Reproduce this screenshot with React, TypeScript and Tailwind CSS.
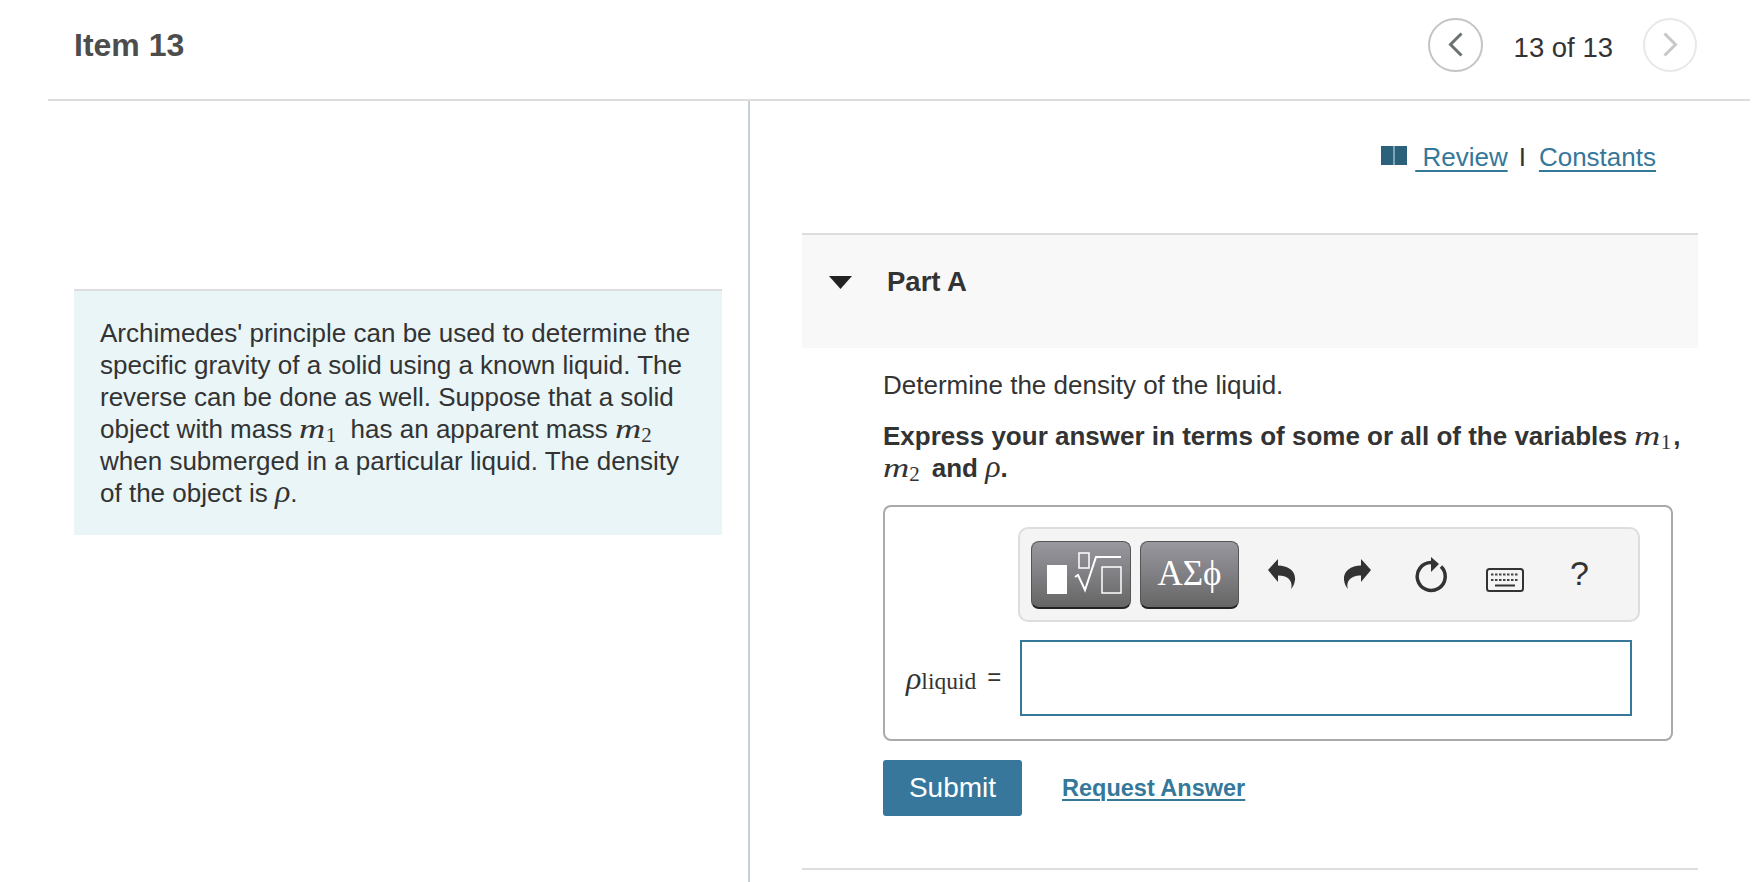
const M = ({ children }: { children: React.ReactNode }) => (
  <span className="inline-block origin-left scale-x-[1.3] mr-[6px] font-['Liberation_Serif',serif] italic text-[28px] leading-none font-normal">{children}</span>
)

const Rho = () => (
  <span className="font-['Liberation_Serif',serif] italic text-[32px] leading-[0] font-normal">ρ</span>
)

const Sub = ({ children }: { children: React.ReactNode }) => (
  <span className="font-['Liberation_Serif',serif] text-[21px] leading-none font-normal relative top-[4px]">{children}</span>
)

const App = () => {
  return (
    <div className="w-[1764px] h-[882px] overflow-hidden bg-white text-[26px] leading-[32px] text-[#333] font-['Liberation_Sans',Arial,sans-serif]">
      <header className="ml-[48px] mr-[14px] h-[101px] pl-[26px] pr-[53px] flex items-center justify-between border-b-2 border-[#ddd]">
        <h1 className="text-[32px] font-bold text-[#4d4d4d] -mt-[10px]">Item 13</h1>
        <div className="flex items-center -mt-[10px]">
          <button className="w-[55px] h-[54px] rounded-full border-2 border-[#c4c4c4] flex items-center justify-center">
            <svg width="15" height="25" viewBox="0 0 15 25" fill="none" stroke="#6a7272" strokeWidth="3"><path d="M13.500 1.500 2.500 12.500l11 11" /></svg>
          </button>
          <span className="ml-[31px] mr-[30px] mt-[6px] text-[27.500px] text-[#333]">13 of 13</span>
          <button className="w-[54px] h-[54px] rounded-full border-2 border-[#e8e8e8] flex items-center justify-center">
            <svg width="15" height="25" viewBox="0 0 15 25" fill="none" stroke="#c8c8c8" strokeWidth="3"><path d="m1.500 1.500 11 11-11 11" /></svg>
          </button>
        </div>
      </header>

      <div className="flex h-[781px]">
        <div className="w-[748px] shrink-0 pl-[74px] pr-[26px] pt-[188px]">
          <div className="border-t-2 border-[#ddd] bg-[#e9f5f7] pl-[26px] pr-[24px] pt-[26px] pb-[26px]">
            <p>
              Archimedes' principle can be used to determine the specific gravity of a solid using a known liquid. The reverse can be done as well. Suppose that a solid object with mass <M>m</M><Sub>1</Sub>&nbsp; has an apparent mass <M>m</M><Sub>2</Sub> when submerged in a particular liquid. The density of the object is <Rho />.
            </p>
          </div>
        </div>

        <div className="flex-1 border-l-2 border-[#c3d2dc] pl-[52px] pr-[66px]">
          <div className="flex justify-end items-center pt-[40px] pr-[42px] text-[#35789a]">
            <a href="#" className="flex items-center underline underline-offset-[4px]">
              <svg width="26" height="19" viewBox="0 0 26 19" className="mr-[8px] -mt-[3px]">
                <rect x="12" y="0" width="2" height="19" fill="#7fa3b5" />
                <rect x="0" y="0" width="12" height="19" fill="#2c617c" />
                <rect x="14" y="0" width="12" height="19" fill="#2c617c" />
              </svg>
              <span className="whitespace-pre"> Review</span>
            </a>
            <span className="ml-[11px] mr-[13px] text-[#333]">I</span>
            <a href="#" className="underline underline-offset-[4px]">Constants</a>
          </div>

          <div className="mt-[60px] h-[115px] border-t-2 border-[#ddd] bg-[#f8f8f8] pt-[31px] pl-[27px] flex">
            <svg width="23" height="13" viewBox="0 0 23 13" fill="#222" className="mt-[10px]"><path d="M0 0h23L11.500 13z" /></svg>
            <h2 className="ml-[35px] text-[27.500px] font-bold">Part A</h2>
          </div>

          <div className="pl-[81px]">
            <p className="mt-[21px]">Determine the density of the liquid.</p>
            <p className="mt-[19px] font-bold">
              Express your answer in terms of some or all of the variables <M>m</M><Sub>1</Sub><span className="ml-[2px]">,</span> <M>m</M><Sub>2</Sub><span className="ml-[12px]">and</span> <Rho />.
            </p>

            <div className="mt-[21px] mr-[25px] border-2 border-[#aaa] rounded-[8px] pt-[20px] pb-[23px] pl-[21px] pr-[39px]">
              <div className="flex justify-end -mr-[8px]">
                <div className="w-[622px] h-[95px] flex items-center border-2 border-[#ddd] rounded-[10px] bg-[#f4f4f4] pl-[11px]">
                  <button className="w-[100px] h-[68px] rounded-[8px] border border-[#555] border-b-2 border-b-[#222] bg-gradient-to-b from-[#9a98a0] to-[#666] flex items-center justify-center">
                    <svg width="86" height="50" viewBox="0 0 86 50" fill="none" stroke="#fff" strokeWidth="1.500">
                      <rect x="9" y="16" width="20" height="29" fill="#fff" stroke="none" />
                      <rect x="41" y="4" width="10" height="15" />
                      <path d="M37 28l3-2 7 15 11-33h25" strokeWidth="2" />
                      <rect x="64" y="18" width="19" height="26" />
                    </svg>
                  </button>
                  <button className="ml-[9px] w-[99px] h-[68px] rounded-[8px] border border-[#555] border-b-2 border-b-[#222] bg-gradient-to-b from-[#9a98a0] to-[#666] text-white font-['Liberation_Serif',serif] text-[35px]">
                    ΑΣϕ
                  </button>
                  <svg width="30" height="32" viewBox="0 0 30 32" fill="#333" className="ml-[27px]">
                    <path d="M2 11 12 0v6.500C22 6.500 30 12 29 21c-.5 4-2 7-4 9 2-6-1-13.500-13-13.500V23z" />
                  </svg>
                  <svg width="30" height="32" viewBox="0 0 30 32" fill="#333" className="ml-[47px]">
                    <path d="M28 11 18 0v6.500C8 6.500 0 12 1 21c.5 4 2 7 4 9-2-6 1-13.500 13-13.500V23z" />
                  </svg>
                  <svg width="34" height="36" viewBox="0 0 34 36" fill="none" className="ml-[40px]">
                    <path d="M18 5.500A14 14 0 1 0 28 9.500" stroke="#333" strokeWidth="3.500" />
                    <path d="M18 0l8 7-8 8z" fill="#333" />
                  </svg>
                  <svg width="38" height="24" viewBox="0 0 38 24" className="ml-[39px] mt-[10px]">
                    <rect x="1" y="1" width="36" height="22" rx="2.500" fill="#f4f4f4" stroke="#333" strokeWidth="2" />
                    <path d="M5 6.500h28M5 12h28" stroke="#444" strokeWidth="2" strokeDasharray="2.500 1.500" />
                    <path d="M9 17.500h20" stroke="#333" strokeWidth="2" />
                  </svg>
                  <span className="ml-[46px] -mt-[4px] text-[34px] text-[#333] font-['Liberation_Sans',sans-serif]">?</span>
                </div>
              </div>

              <div className="mt-[18px] flex items-center">
                <span className="w-[114px] shrink-0 flex items-center font-['Liberation_Serif',serif]">
                  <span className="italic text-[32px] leading-none">ρ</span>
                  <span className="text-[23.500px] leading-none relative top-[4px]">liquid</span>
                  <span className="ml-[11px] font-['Liberation_Sans',sans-serif] text-[24px] leading-none -mt-[2px]">=</span>
                </span>
                <div className="flex-1 h-[76px] border-2 border-[#35789a] bg-white" />
              </div>
            </div>

            <div className="mt-[19px] flex items-center">
              <button className="w-[139px] h-[56px] rounded-[3px] bg-[#36779b] text-white text-[28px]">Submit</button>
              <a href="#" className="ml-[40px] font-bold text-[23.500px] text-[#35789a] underline decoration-2 underline-offset-[3px]">Request Answer</a>
            </div>
          </div>

          <div className="mt-[52px] border-t-2 border-[#ddd]" />
        </div>
      </div>
    </div>
  )
}

export default App
